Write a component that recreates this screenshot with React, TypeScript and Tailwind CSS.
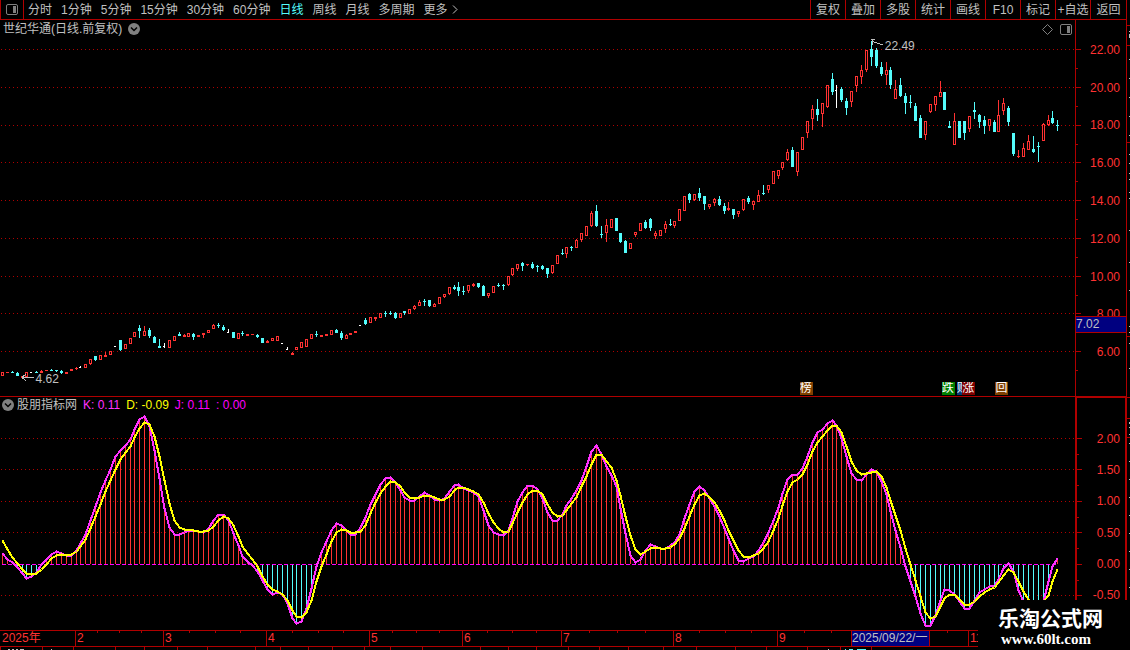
import React from "react";

// One entry per trading day: colour, body top, body bottom, then high and low
// when the candle has a wick. r = up, c = down, w = flat
const CANDLES = `
r372,376 r372,373 c372,373,371,373 c373,376,372,376 r376,378 r372,377 w372,373 c372,373,371,373 r371,373,370,373 r370,371
c370,371,369,371 c370,371,370,372 c371,373,370,374 r372,374 r369,371 r368,369,367,370 w367,368,366,368 r364,368 r359,364,359,365 c356,360,356,361
r355,360 r355,357,352,357 r351,355 w346,347 c340,350,340,351 r344,349 r338,344 r332,337 c328,331,325,338 r331,336,326,336
c330,336,328,338 c337,343,336,343 c346,348,339,348 w346,347,343,348 r340,348 r336,341 c334,336,332,336 r335,337,334,337 r333,337 c334,337,333,340
r335,337 r333,335,333,338 r330,333 r325,329,324,329 c325,326,323,328 c327,330,325,331 w332,333,329,333 c332,338 r333,339 c333,334,331,336
r334,336 r334,335 c335,337,334,338 c338,343 r341,343,340,343 r338,341 r336,341 w343,344 w349,350,347,350 r353,355,352,355
r347,350 r342,348 r339,347 r334,339 c334,335,331,337 r335,337 r334,336 r330,335 c330,333,329,333 c333,338,331,340
r335,339,334,339 r333,335 r331,333 w325,326 c320,324,318,325 r317,323 r317,319,317,321 r313,318 c313,314,311,317 c313,314,311,315
c313,318,312,319 r313,318 c311,313,311,315 r309,314 r306,309,305,310 r302,306,300,306 c301,302,299,306 c300,306,300,307 r304,307,303,307 r297,304
r294,297,294,298 r287,294,287,295 c287,289,285,290 c287,291,282,296 c291,292,286,295 r285,291,285,293 r284,286,283,287 c283,287,283,288 c286,296,285,296 r293,296,293,298
r286,293 c285,286,283,287 c285,286,284,290 r276,285,276,286 r268,275,268,276 r264,269,264,271 c263,266,262,271 r264,265,264,266 c264,268,262,269 c266,267,265,272
c266,269,265,270 c268,274,268,278 r265,273,265,274 r255,264 c253,254,249,255 r247,254,247,258 c247,248,246,251 r240,248,239,248 r233,240,233,242 r226,236
r213,226,211,227 c211,226,205,227 c234,235,226,238 r225,233,219,242 r219,228 c218,231 c233,242,233,243 c241,253,240,253 r243,249 r232,235,232,237
r223,231 c222,228,220,229 c219,228,218,231 r233,236,231,239 r230,236 r224,229,221,233 c224,225,219,226 r221,226,221,228 r209,221 r196,211
c194,200,193,203 r194,200,194,201 c193,198,188,201 c196,204,196,210 r204,207,204,209 r199,203,198,206 c199,205,196,206 c206,211,203,214 r208,210,202,211 c209,215,209,219
r211,214,211,217 r199,210,199,211 c198,202,196,204 r201,205,201,210 r195,202,190,202 c193,194,185,195 r185,190,185,193 r171,184 r170,176,170,179 r162,168,162,170
r152,160,149,161 c150,167,147,167 r152,172,152,176 r137,150 r121,133,121,138 r109,119,105,130 c109,115,99,121 r103,114,103,127 r85,107,85,108 c79,92,73,95
w90,91,85,108 c89,100,87,102 c101,108,98,115 r91,102,91,107 r76,86,76,92 r70,77,65,84 r50,70,50,72 c49,57,41,66 c50,66,48,68 c67,74,62,76
r70,75,62,85 c70,85,67,89 r89,99,80,99 c85,96,78,97 c96,103,93,114 c102,103,95,108 c106,121,103,121 c118,138,115,138 r121,135,121,140 r104,112,104,113
r96,105,96,111 r92,97,81,97 c92,110 c126,128,121,128 r121,145,113,145 c121,138 c121,133,121,140 r116,129,116,132 c110,112,102,119 c115,122,114,128
c120,126,116,134 r119,126,119,131 c122,132,120,132 r115,132,100,132 r103,111,98,115 c108,122,106,126 c133,154,133,156 r156,157,150,158 r148,157,143,157 r141,150,135,150
c149,152,136,153 c146,147,142,162 r124,141,123,141 r120,125,115,126 c118,123,111,124 c125,126,120,131
`
  .trim()
  .split(/\s+/)
  .map((entry) => {
    const [top, bottom, high = top, low = bottom] = entry
      .slice(1)
      .split(",")
      .map(Number);
    return { kind: entry[0], top, bottom, high, low };
  });

// Height above the zero line, one number per day
const K_LINE = [
  11, 5, 2, -3, -9, -14, -12, -8, 0, 5, 10, 13, 11, 9, 9, 14, 21, 30, 44, 58,
  72, 84, 95, 108, 114, 119, 125, 135, 145, 148, 138, 114, 86, 56, 37, 30, 30,
  32, 34, 34, 33, 32, 36, 44, 50, 50, 44, 31, 19, 8, 3, -1, -7, -16, -25, -30,
  -28, -30, -39, -54, -59, -57, -44, -24, -2, 12, 23, 34, 41, 39, 34, 30, 30,
  37, 47, 60, 70, 80, 86, 87, 82, 74, 67, 64, 64, 68, 72, 69, 65, 64, 66, 73,
  79, 80, 76, 74, 72, 68, 54, 39, 32, 30, 29, 34, 46, 63, 72, 79, 79, 75, 66,
  52, 44, 44, 50, 59, 66, 74, 84, 98, 113, 119, 110, 98, 89, 78, 56, 31, 9, 2,
  5, 14, 20, 18, 16, 16, 19, 22, 30, 46, 60, 73, 78, 74, 66, 58, 48, 36, 26,
  14, 4, 3, 6, 8, 14, 22, 32, 44, 57, 71, 85, 90, 90, 96, 108, 122, 132, 135,
  141, 144, 139, 126, 108, 91, 85, 84, 90, 95, 93, 83, 70, 53, 34, 17, -2, -17,
  -32, -49, -61, -61, -51, -36, -25, -26, -30, -37, -44, -44, -36, -28, -25,
  -22, -21, -15, -4, 1, -7, -26, -37, -46, -49, -47, -37, -17, -2, 6,
];

const D_LINE = [
  24, 15, 7, 1, -5, -9, -10, -9, -5, 0, 6, 9, 10, 9, 10, 13, 18, 25, 36, 48,
  60, 73, 84, 95, 105, 112, 118, 127, 136, 142, 140, 128, 108, 84, 61, 44, 37,
  35, 35, 34, 33, 33, 34, 38, 44, 48, 46, 39, 28, 18, 11, 5, -2, -12, -20, -25,
  -27, -30, -36, -46, -52, -53, -48, -36, -17, -2, 10, 23, 32, 35, 34, 32, 32,
  33, 39, 51, 62, 71, 78, 83, 82, 78, 72, 67, 66, 67, 69, 69, 67, 65, 65, 68,
  74, 77, 77, 75, 73, 70, 62, 51, 42, 36, 32, 33, 41, 52, 62, 70, 74, 74, 70,
  60, 52, 48, 49, 54, 61, 67, 78, 88, 100, 110, 110, 103, 97, 84, 69, 48, 29,
  15, 10, 13, 16, 17, 16, 16, 17, 20, 26, 36, 48, 60, 69, 71, 67, 62, 54, 44,
  34, 24, 14, 8, 7, 9, 11, 16, 23, 34, 46, 59, 73, 82, 85, 90, 100, 113, 122,
  128, 134, 139, 139, 132, 118, 103, 94, 90, 91, 92, 93, 88, 77, 64, 49, 34,
  16, 0, -16, -32, -48, -54, -52, -42, -34, -30, -30, -35, -40, -40, -37, -32,
  -28, -25, -23, -18, -11, -5, -8, -17, -27, -35, -40, -42, -37, -31, -17, -5,
];

const PRICE_GRID = [49, 87, 125, 162, 200, 238, 276, 313, 351];
const PRICE_LABELS = [
  "22.00",
  "20.00",
  "18.00",
  "16.00",
  "14.00",
  "12.00",
  "10.00",
  "8.00",
  "6.00",
];
const INDICATOR_GRID = [438, 469, 501, 532, 595];
const INDICATOR_TICKS = [438, 469, 501, 532, 564, 595];
const INDICATOR_LABELS = ["2.00", "1.50", "1.00", "0.50", "0.00", "-0.50"];
const ZERO = 564;

const PERIODS = [
  "分时",
  "1分钟",
  "5分钟",
  "15分钟",
  "30分钟",
  "60分钟",
  "日线",
  "周线",
  "月线",
  "多周期",
];

const TOOLS = [
  "复权",
  "叠加",
  "多股",
  "统计",
  "画线",
  "F10",
  "标记",
  "+自选",
  "返回",
];

const MONTHS = [
  { label: "2025年", width: 75 },
  { label: "2", width: 88 },
  { label: "3", width: 103 },
  { label: "4", width: 103 },
  { label: "5", width: 93 },
  { label: "6", width: 99 },
  { label: "7", width: 112 },
  { label: "8", width: 104 },
  { label: "9", width: 74 },
  { label: "2025/09/22/一", width: 78, cursor: true },
  { label: "", width: 39 },
  { label: "11", width: 158 },
];

const WEEK_TICKS = [
  97, 119, 141, 189, 215, 240, 292, 318, 343, 392, 416, 439, 487, 512, 536, 589,
  617, 645, 699, 725, 751, 804, 831, 947,
];
const LOWER_TICKS = [
  0, 42, 73, 115, 144, 177, 207, 255, 280, 308, 332, 364, 390, 422, 480, 508,
  536, 568, 599, 628, 663, 696, 735, 766, 807, 840, 871,
];

const COLORS: Record<string, string> = {
  r: "#ff3232",
  c: "#54fcfc",
  w: "#ffffff",
};

// Days are 5 units apart, with one unit dropped every 11 days
const dayX = (i: number) => 2 + 5 * i - Math.floor((i + 6) / 11);

const toPoints = (line: number[]) =>
  line.map((v, i) => `${dayX(i) + 0.5},${ZERO + 0.5 - v}`).join(" ");

const GridLines = ({ rows }: { rows: number[] }) => (
  <>
    {rows.map((y) => (
      <line
        key={y}
        x1="1"
        x2="1075"
        y1={y + 0.5}
        y2={y + 0.5}
        stroke="#b00000"
        strokeDasharray="1 3"
      />
    ))}
  </>
);

const PriceChart = () => (
  <svg
    className="block w-full h-[358px]"
    viewBox="0 38 1075 358"
    preserveAspectRatio="none"
    shapeRendering="crispEdges"
  >
    <GridLines rows={PRICE_GRID} />
    {CANDLES.map(({ kind, top, bottom, high, low }, i) => {
      const x = dayX(i);
      const color = COLORS[kind];
      const hollow = kind === "r" && bottom - top > 2;
      return (
        <g key={i} fill={color}>
          <rect x={x} y={high} width="1" height={low - high} />
          <rect
            x={x - 1}
            y={top}
            width={kind === "w" ? 2 : 3}
            height={bottom - top}
          />
          {hollow && (
            <rect
              x={x}
              y={top + 1}
              width="1"
              height={bottom - top - 2}
              fill="#000"
            />
          )}
        </g>
      );
    })}
    <g fill="none" stroke="#c0c0c0">
      <path d="M22 377.5H34M22 377.5L26 374M22 377.5L26 381" />
      <path d="M872 41.5L883 45M871 39.5H875M872 40V45" />
    </g>
  </svg>
);

const IndicatorChart = () => (
  <svg
    className="block w-full h-[217px]"
    viewBox="0 413 1075 217"
    preserveAspectRatio="none"
    shapeRendering="crispEdges"
  >
    <GridLines rows={INDICATOR_GRID} />
    {K_LINE.map((v, i) => (
      <rect
        key={i}
        x={dayX(i)}
        y={v > 0 ? ZERO - v : ZERO + 1}
        width="1"
        height={Math.abs(v)}
        fill={v > 0 ? COLORS.r : COLORS.c}
      />
    ))}
    <line
      x1="2"
      x2="1058"
      y1={ZERO + 0.5}
      y2={ZERO + 0.5}
      stroke="#ff00ff"
      strokeDasharray="4 2"
    />
    <g fill="none" strokeWidth="2">
      <polyline points={toPoints(K_LINE)} stroke="#ff32ff" />
      <polyline points={toPoints(D_LINE)} stroke="#ffff00" />
    </g>
  </svg>
);

const ChevronBadge = () => (
  <svg className="size-3 shrink-0" viewBox="0 0 12 12">
    <circle cx="6" cy="6" r="6" fill="#808080" />
    <path
      d="M3 4.5L6 7.5L9 4.5"
      fill="none"
      stroke="#000"
      strokeWidth="1.5"
    />
  </svg>
);

const PanelIcon = () => (
  <svg className="w-3 h-[11px] shrink-0" viewBox="0 0 12 11">
    <rect
      x="0.5"
      y="0.5"
      width="11"
      height="10"
      rx="1.5"
      fill="none"
      stroke="#808080"
    />
    <rect x="7" y="2" width="3" height="7" fill="#808080" />
  </svg>
);

const TopBar = () => (
  <header className="flex h-5 border-b border-[#b00000] leading-[18px] whitespace-nowrap">
    <button
      className="flex w-6 items-center justify-center border-x border-[#b00000]"
      aria-label="侧栏"
    >
      <PanelIcon />
    </button>
    <nav className="flex flex-1 gap-[9px] pl-1">
      {PERIODS.map((period) => (
        <button
          key={period}
          className={period === "日线" ? "text-[#54fcfc]" : "text-[#c0c0c0]"}
        >
          {period}
        </button>
      ))}
      <button className="flex items-center gap-1">
        更多
        <svg className="w-[6px] h-[9px]" viewBox="0 0 6 9">
          <path d="M1 0.5L5 4.5L1 8.5" fill="none" stroke="#c0c0c0" />
        </svg>
      </button>
    </nav>
    <div className="flex">
      {TOOLS.map((tool) => (
        <button
          key={tool}
          className="w-[35px] border-l border-[#b00000] text-center last:w-9"
        >
          {tool}
        </button>
      ))}
    </div>
  </header>
);

const PricePanel = () => (
  <section className="flex border-b border-[#b00000]">
    <div className="relative min-w-0 flex-1">
      <div className="flex h-[18px] items-center gap-[6px] pl-[3px] pr-[3px]">
        <h1>世纪华通(日线.前复权)</h1>
        <ChevronBadge />
        <svg className="ml-auto mr-px size-[11px]" viewBox="0 0 11 11">
          <path
            d="M5.5 0.5L10.5 5.5L5.5 10.5L0.5 5.5Z"
            fill="none"
            stroke="#808080"
          />
        </svg>
        <PanelIcon />
      </div>
      <PriceChart />
      <span className="absolute left-[82.3%] top-[18px] leading-4">22.49</span>
      <span className="absolute left-[3.3%] top-[351px] leading-4">4.62</span>
      <Badge className="left-[74.4%] w-[13px] bg-[#804000]" label="榜" />
      <Badge className="left-[87.6%] w-[13px] bg-[#008000]" label="跌" />
      <Badge className="left-[89%] w-[5px] bg-[#003c78]" label="财" />
      <Badge className="left-[89.5%] w-[13px] bg-[#800000]" label="涨" />
      <Badge className="left-[92.6%] w-[13px] bg-[#804000]" label="回" />
    </div>
    <div className="relative w-[51px] border-l border-[#b00000] pt-[11px]">
      <AxisTicks top={20} height={376} rows={PRICE_GRID} half={19} />
      <ul className="grid h-[340px] grid-rows-9 items-center pr-[6px] text-right text-[#ff3232]">
        {PRICE_LABELS.map((label) => (
          <li key={label}>{label}</li>
        ))}
      </ul>
      <div className="absolute inset-x-0 top-[296px] h-[17px] border-y border-[#b00000] bg-[#000080] leading-[15px]">
        7.02
      </div>
    </div>
  </section>
);

const Badge = ({ className, label }: { className: string; label: string }) => (
  <span
    className={`absolute bottom-px h-[13px] overflow-hidden leading-[13px] text-white ${className}`}
  >
    {label}
  </span>
);

type AxisTicksProps = {
  top: number;
  height: number;
  rows: number[];
  half: number;
};

const AxisTicks = ({ top, height, rows, half }: AxisTicksProps) => (
  <svg
    className="absolute left-0 top-0 h-full w-[5px]"
    viewBox={`0 ${top} 5 ${height}`}
    fill="#b00000"
    shapeRendering="crispEdges"
  >
    {rows.map((y) => (
      <g key={y}>
        <rect x="0" y={y} width="5" height="1" />
        <rect x="0" y={y + half} width="2" height="1" />
      </g>
    ))}
  </svg>
);

const IndicatorPanel = () => (
  <section className="flex">
    <div className="min-w-0 flex-1">
      <div className="flex h-4 items-center gap-[6px] pl-[2px]">
        <h2 className="flex items-center gap-[3px]">
          <ChevronBadge />
          股朋指标网
        </h2>
        <span className="text-[#ff32ff]">K: 0.11</span>
        <span className="text-[#ffff00]">D: -0.09</span>
        <span className="text-[#ff00ff]">J: 0.11</span>
        <span className="text-[#ff00ff]">: 0.00</span>
      </div>
      <IndicatorChart />
    </div>
    <div className="relative w-[51px] border-l-2 border-r border-t border-[#b00000] pt-[25px]">
      <AxisTicks top={398} height={232} rows={INDICATOR_TICKS} half={16} />
      <ul className="grid h-[188px] grid-rows-6 items-center pr-[5px] text-right text-[#ff3232]">
        {INDICATOR_LABELS.map((label) => (
          <li key={label}>{label}</li>
        ))}
      </ul>
    </div>
  </section>
);

const TimeAxis = () => (
  <section className="relative border-y border-[#b00000]">
    <svg
      className="absolute left-0 top-0 h-[2px] w-full"
      viewBox="0 0 1126 2"
      preserveAspectRatio="none"
      fill="#b00000"
      shapeRendering="crispEdges"
    >
      {WEEK_TICKS.map((x) => (
        <rect key={x} x={x} y="0" width="1" height="2" />
      ))}
    </svg>
    <ol
      className="grid h-[15px] leading-[15px] text-[#ff3232]"
      style={{
        gridTemplateColumns: MONTHS.map((m) => `${m.width}fr`).join(" "),
      }}
    >
      {MONTHS.map(({ label, cursor }, i) => (
        <li
          key={i}
          className={
            cursor
              ? "min-w-0 overflow-hidden whitespace-nowrap border-l border-[#b00000] bg-[#000080] text-[#c0c0c0]"
              : "min-w-0 border-l border-[#b00000] pl-px first:border-black"
          }
        >
          {label}
        </li>
      ))}
    </ol>
  </section>
);

const LowerStrip = () => (
  <svg
    className="block h-[3px] w-full"
    viewBox="0 0 1126 3"
    preserveAspectRatio="none"
    shapeRendering="crispEdges"
  >
    {LOWER_TICKS.map((x) => (
      <rect key={x} x={x} y="0" width="1" height="3" fill="#b00000" />
    ))}
    <path
      d="M8 2.5H10M12 2.5H14M16 2.5H18M20 2.5H24M51 2.5H52M828 2.5H829"
      stroke="#c0c0c0"
    />
    <path d="M845 2.5H846M849 2.5H853M857 2.5H866" stroke="#54fcfc" />
  </svg>
);

// The edge of the quote column on the right
const SideEdge = () => (
  <aside className="w-1 shrink-0 border-l border-[#b00000]">
    <svg className="block h-[600px] w-[3px]" shapeRendering="crispEdges">
      <path
        d="M0 25.5H3M0 45.5H3M0 142.5H3M0 336.5H3M0 397.5H3M0 418.5H3M0 437.5H3"
        stroke="#b00000"
      />
      <path
        d="M2.5 31V32M2.5 34V38M2.5 59V60M2.5 78V79M2.5 97V98M2.5 116V117M2.5 135V136M2.5 154V155M2.5 163V164M2.5 173V174M2.5 179V180M2.5 192V193M2.5 198V199M2.5 230V231M2.5 262V263M2.5 290V291M2.5 326V327M2.5 332V333M2.5 343V344M2.5 368V369M2.5 422V424M2.5 427V428M2.5 434V435M2.5 443V444M2.5 461V462M2.5 479V480M2.5 497V498M2.5 515V516M2.5 533V534M2.5 551V552M2.5 569V570M2.5 587V588"
        stroke="#c0c0c0"
      />
    </svg>
  </aside>
);

const App = () => {
  return (
    <div className="relative flex min-h-screen bg-black font-['Liberation_Sans','Noto_Sans_CJK_SC',sans-serif] text-xs text-[#c0c0c0]">
      <main className="min-w-0 flex-1">
        <TopBar />
        <PricePanel />
        <IndicatorPanel />
        <TimeAxis />
        <LowerStrip />
      </main>
      <SideEdge />
      <div className="absolute bottom-0 right-0 h-[50px] w-[152px] bg-black pl-5 pt-[6px] text-white">
        <p className="text-[21px] font-bold leading-[26px]">乐淘公式网</p>
        <p className="pl-[3px] font-['Liberation_Serif',serif] text-[15px] font-bold leading-[14px]">
          www.60lt.com
        </p>
      </div>
    </div>
  );
};

export default App;
